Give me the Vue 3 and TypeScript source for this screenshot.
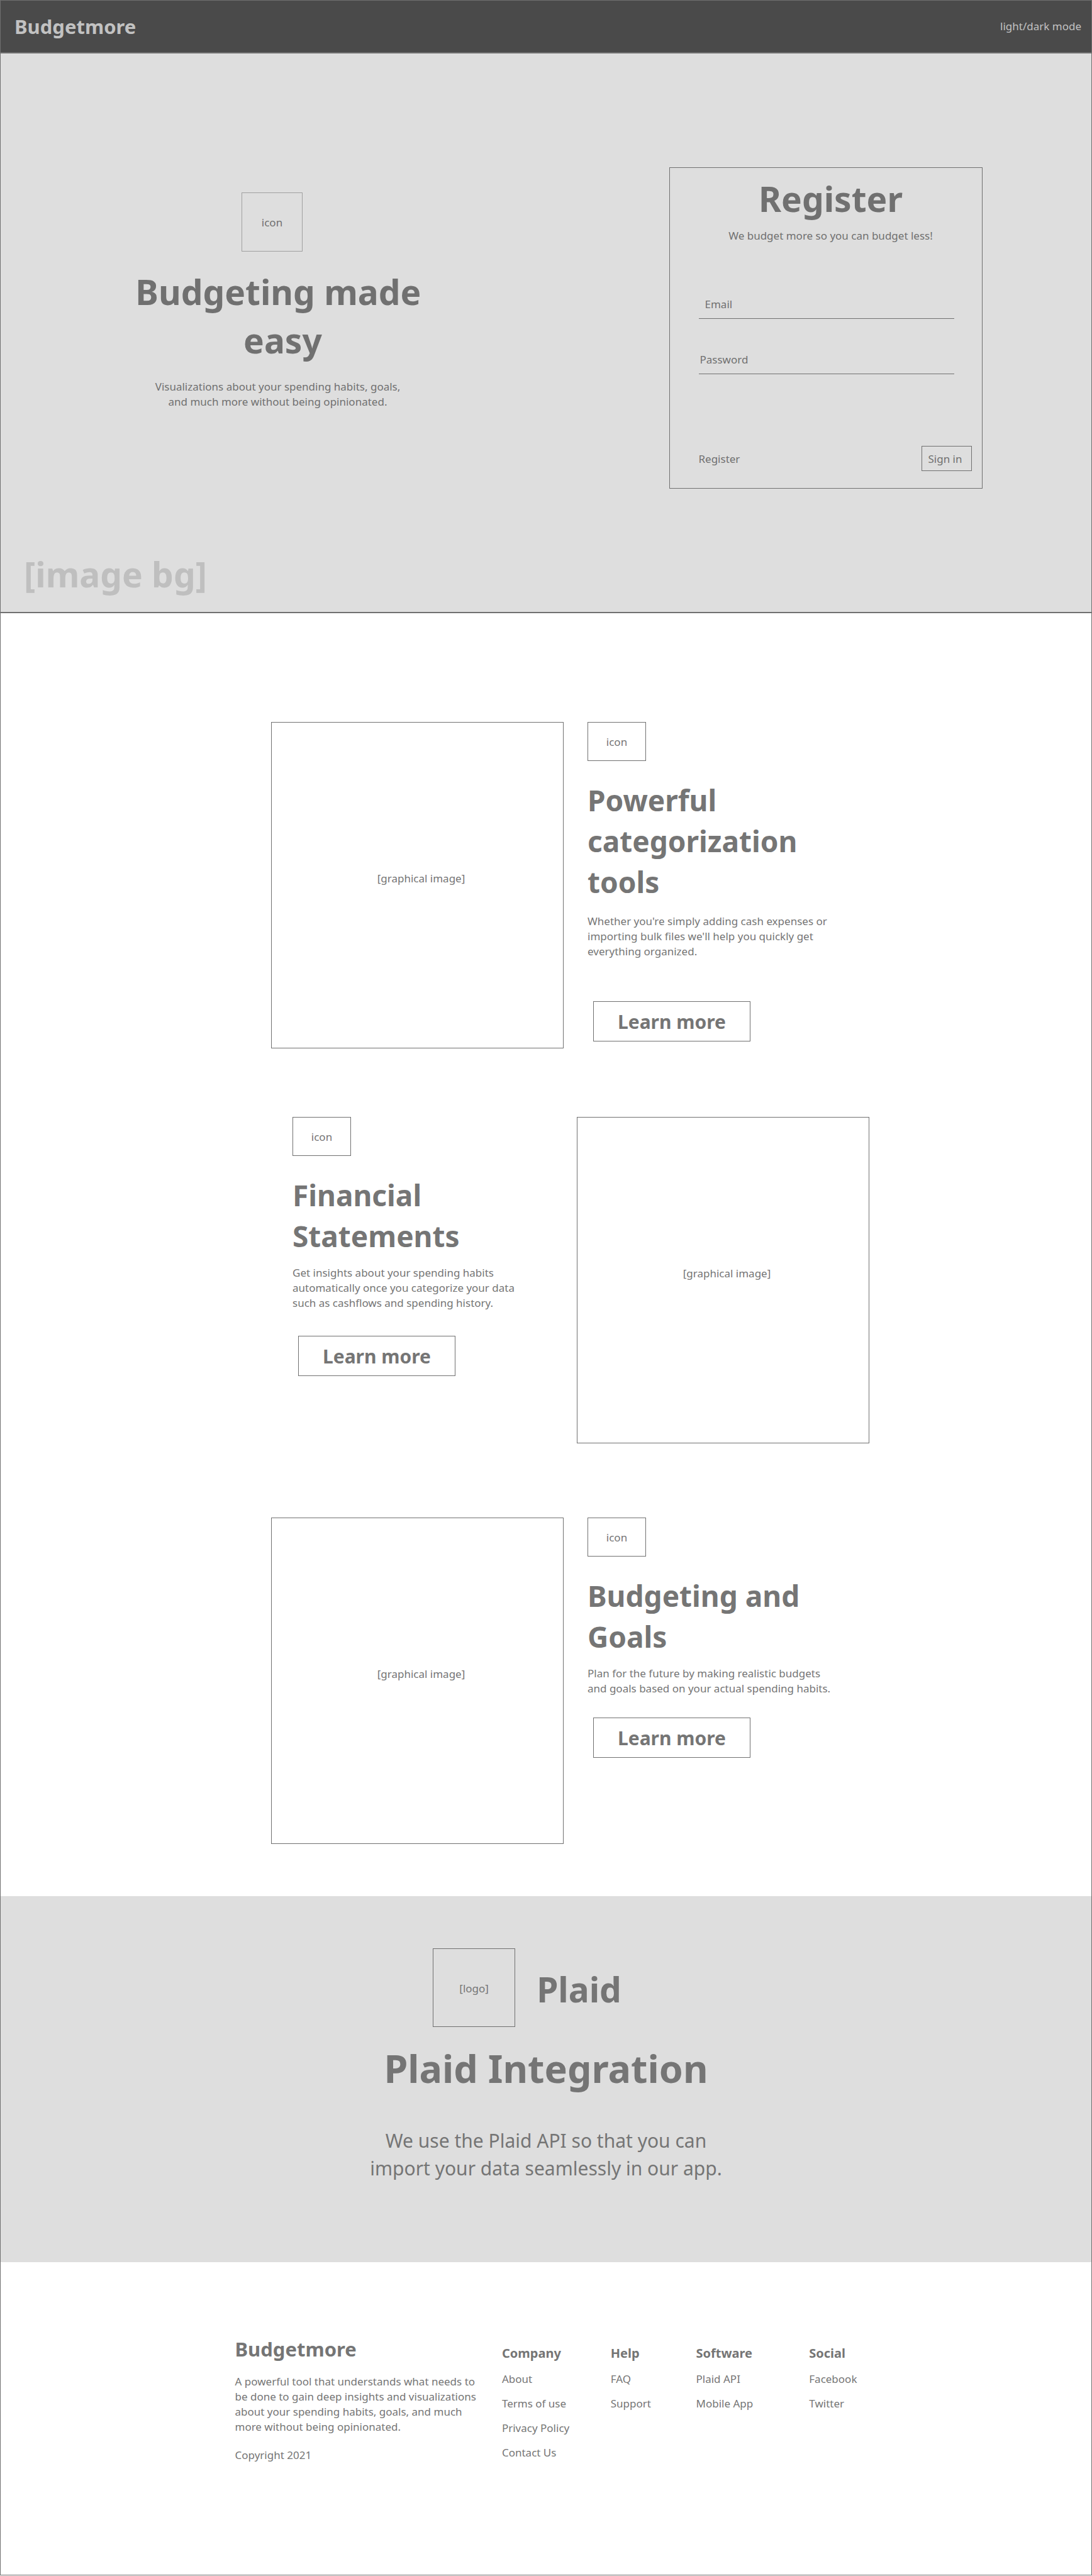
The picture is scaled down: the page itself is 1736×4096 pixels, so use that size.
<script setup lang="ts">
import { ref } from 'vue'

interface Feature {
  id: string
  title: string
  text: string
}

interface LinkGroup {
  title: string
  links: string[]
}

const features: Feature[] = [
  {
    id: 'tools',
    title: 'Powerful\ncategorization\ntools',
    text: "Whether you're simply adding cash expenses or\nimporting bulk files we'll help you quickly get\neverything organized.",
  },
  {
    id: 'statements',
    title: 'Financial\nStatements',
    text: 'Get insights about your spending habits\nautomatically once you categorize your data\nsuch as cashflows and spending history.',
  },
  {
    id: 'goals',
    title: 'Budgeting and\nGoals',
    text: 'Plan for the future by making realistic budgets\nand goals based on your actual spending habits.',
  },
]

const linkGroups: LinkGroup[] = [
  { title: 'Company', links: ['About', 'Terms of use', 'Privacy Policy', 'Contact Us'] },
  { title: 'Help', links: ['FAQ', 'Support'] },
  { title: 'Software', links: ['Plaid API', 'Mobile App'] },
  { title: 'Social', links: ['Facebook', 'Twitter'] },
]

const email = ref('')
const password = ref('')
</script>

<template>
  <div class="page">
    <header class="topbar">
      <a class="brand" href="#">Budgetmore</a>
      <button class="mode" type="button">light/dark mode</button>
    </header>

    <section class="hero">
      <div class="hero-columns">
        <div class="hero-copy">
          <div class="box hero-icon">icon</div>
          <h1 class="display hero-title">Budgeting made&nbsp;<br />easy</h1>
          <p class="hero-text">
            Visualizations about your spending habits, goals,<br />and much more without being opinionated.
          </p>
        </div>

        <form class="card" @submit.prevent>
          <h2 class="display card-title">Register</h2>
          <p class="card-text">We budget more so you can budget less!</p>
          <div class="field field-email">
            <label for="email">Email</label>
            <input id="email" v-model="email" type="email" />
          </div>
          <div class="field">
            <label for="password">Password</label>
            <input id="password" v-model="password" type="password" />
          </div>
          <div class="card-actions">
            <a href="#">Register</a>
            <button class="sign-in" type="submit">Sign in</button>
          </div>
        </form>
      </div>
      <p class="display hero-label">[image bg]</p>
    </section>

    <main class="features">
      <article v-for="feature in features" :key="feature.id" class="feature" :class="feature.id">
        <div class="box picture">[graphical image]</div>
        <div class="feature-copy">
          <div class="box feature-icon">icon</div>
          <h2 class="feature-title">{{ feature.title }}</h2>
          <p class="feature-text">{{ feature.text }}</p>
          <button class="learn-more" type="button">Learn more</button>
        </div>
      </article>
    </main>

    <section class="plaid">
      <div class="plaid-brand">
        <div class="box plaid-logo">[logo]</div>
        <span class="display">Plaid</span>
      </div>
      <h2 class="plaid-title">Plaid Integration</h2>
      <p class="plaid-text">We use the Plaid API so that you can<br />import your data seamlessly in our app.</p>
    </section>

    <footer class="footer">
      <div class="footer-grid">
        <div>
          <h3 class="brand">Budgetmore</h3>
          <p class="footer-text">
            A powerful tool that understands what needs to<br />be done to gain deep insights and visualizations<br />about
            your spending habits, goals, and much<br />more without being opinionated.
          </p>
          <p class="copyright">Copyright 2021</p>
        </div>
        <nav v-for="group in linkGroups" :key="group.title" class="links" :aria-label="group.title">
          <h4>{{ group.title }}</h4>
          <a v-for="link in group.links" :key="link" href="#">{{ link }}</a>
        </nav>
      </div>
    </footer>
  </div>
</template>

<style>
body {
  margin: 0;
}
</style>

<style scoped>
.page {
  box-sizing: border-box;
  border: 1px solid #707070;
  background: #fff;
  color: #757575;
  font: 17px/24px 'Noto Sans', 'Open Sans', sans-serif;
}

.page *,
.page *::before {
  box-sizing: border-box;
}

h1,
h2,
h3,
h4,
p {
  margin: 0;
}

a {
  color: inherit;
  text-decoration: none;
}

button,
input {
  border: 0;
  padding: 0;
  background: none;
  color: inherit;
  font: inherit;
}

.brand {
  font-size: 31px;
  line-height: 44px;
  font-weight: 700;
}

.display {
  font-size: 55px;
  line-height: 77px;
  font-weight: 700;
}

.box {
  display: flex;
  align-items: center;
  justify-content: center;
  padding-top: 2px;
  border: 1px solid #707070;
}

.topbar {
  display: flex;
  align-items: center;
  justify-content: space-between;
  height: 84px;
  padding: 0 16px 0 22px;
  border-bottom: 2px solid #707070;
  background: #4a4a4a;
  color: #c2c2c2;
}

.hero {
  padding: 181px 0 22px;
  border-bottom: 2px solid #707070;
  background: #dedede;
  color: #707070;
}

.hero-columns {
  display: grid;
  grid-template-columns: 1fr 1fr;
  gap: 26px;
  padding-left: 18px;
}

.hero-copy {
  display: flex;
  flex-direction: column;
  align-items: center;
  padding-top: 40px;
  text-align: center;
}

.hero-icon {
  width: 97px;
  height: 94px;
  margin-right: 18px;
  border-color: #a0a0a0;
}

.hero-title {
  margin: 25px 0 24px;
  padding-left: 16px;
}

.card {
  justify-self: center;
  width: 498px;
  padding: 10px 16px 27px 46px;
  border: 1px solid #707070;
}

.card-title,
.card-text {
  margin-right: 14px;
  text-align: center;
}

.card-text {
  margin-top: 9px;
  margin-bottom: 85px;
}

.field {
  display: flex;
  gap: 8px;
  margin: 0 28px 53px 0;
  padding: 0 0 10px 2px;
  border-bottom: 1px solid #707070;
}

.field-email {
  padding-left: 10px;
}

.field input {
  flex: 1;
  min-width: 0;
  height: 24px;
  outline: none;
}

.card-actions {
  display: flex;
  align-items: baseline;
  justify-content: space-between;
  margin-top: 114px;
}

.sign-in {
  width: 80px;
  height: 40px;
  padding: 2px 4px 0 0;
  border: 1px solid #707070;
}

.hero-label {
  margin-top: 97px;
  padding-left: 37px;
  color: #bfbfbf;
}

.features {
  padding: 173px 0 83px 77px;
}

.feature {
  display: flex;
  gap: 38px;
  max-width: 951px;
  margin: 0 auto;
}

.statements {
  flex-direction: row-reverse;
  justify-content: space-between;
  margin-top: 109px;
  margin-bottom: 118px;
  padding-left: 34px;
}

.picture {
  width: 465px;
  height: 519px;
  padding: 0 0 22px 12px;
}

.feature-copy {
  display: flex;
  flex-direction: column;
  align-items: flex-start;
}

.feature-icon {
  width: 93px;
  height: 62px;
}

.feature-title {
  margin: 30px 0 14px;
  font-size: 46px;
  line-height: 65px;
  font-weight: 700;
  white-space: pre-line;
}

.feature-text {
  white-space: pre-line;
}

.learn-more {
  width: 250px;
  height: 64px;
  margin: 34px 0 0 9px;
  padding-top: 2px;
  border: 1px solid #707070;
  font-size: 30px;
  line-height: 44px;
  font-weight: 700;
}

.tools .feature-title {
  margin-bottom: 18px;
}

.tools .learn-more {
  margin-top: 67px;
}

.statements .learn-more {
  margin-top: 40px;
}

.plaid {
  padding: 83px 0 127px;
  background: #dedede;
  text-align: center;
}

.plaid-brand {
  display: flex;
  align-items: center;
  justify-content: center;
  gap: 34px;
  padding-right: 60px;
}

.plaid-brand .display {
  padding-top: 4px;
}

.plaid-logo {
  width: 131px;
  height: 125px;
}

.plaid-title {
  margin: 23px 0 50px;
  font-size: 61px;
  line-height: 86px;
  font-weight: 700;
}

.plaid-text {
  font-size: 30px;
  line-height: 44px;
}

.footer {
  padding: 116px 0 178px;
}

.footer-grid {
  display: grid;
  grid-template-columns: 425fr 173fr 136fr 180fr 75fr;
  max-width: 989px;
  margin: 0 auto;
}

.footer-text {
  margin: 18px 0 21px;
  white-space: nowrap;
}

.links {
  display: flex;
  flex-direction: column;
  gap: 15px;
  padding-top: 15px;
  white-space: nowrap;
}

.links h4 {
  font-size: 20px;
  line-height: 28px;
  font-weight: 700;
}
</style>
